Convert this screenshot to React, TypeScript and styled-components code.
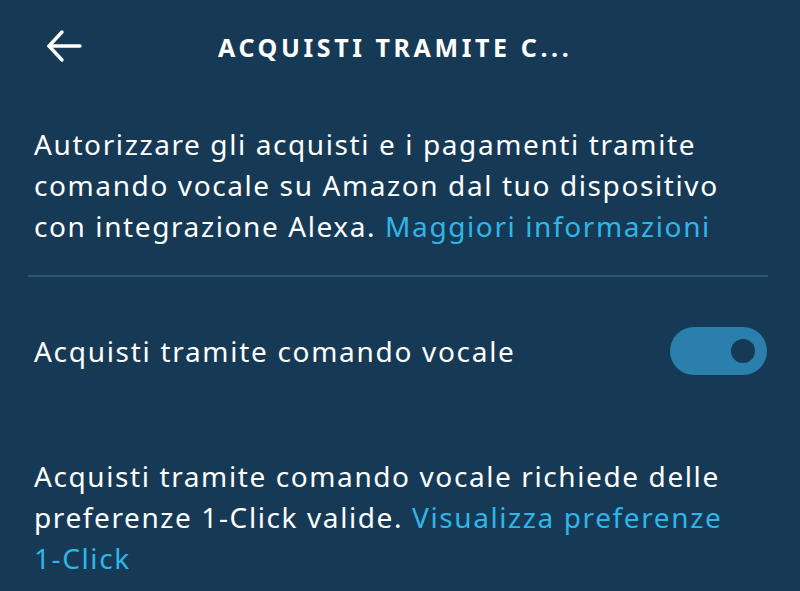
import React from 'react';
import styled, {createGlobalStyle} from 'styled-components';

const GlobalStyle = createGlobalStyle`
    html, body {
        margin: 0;
        padding: 0;
        background: #163a55;
    }
    body {
        font-family: "Noto Sans", "Open Sans", sans-serif;
        color: #ffffff;
    }
`;

const BackArrow: React.FunctionComponent = () => (
    <svg width="40" height="40" viewBox="0 0 40 40" fill="none" stroke="#ffffff" strokeWidth="3.4" strokeLinecap="round" strokeLinejoin="round">
        <path d="M36 20H5"/>
        <path d="M18 6L5 20l13 14"/>
    </svg>
);

const App: React.FunctionComponent = () => {
    const [enabled, setEnabled] = React.useState(true);
    return (
        <Wrapper>
            <GlobalStyle/>
            <Header>
                <BackButton aria-label="Indietro"><BackArrow/></BackButton>
                <Title>ACQUISTI TRAMITE C...</Title>
            </Header>
            <Section>
                <Text>
                    Autorizzare gli acquisti e i pagamenti tramite<br/>
                    comando vocale su Amazon dal tuo dispositivo<br/>
                    con integrazione Alexa. <Link href="#">Maggiori informazioni</Link>
                </Text>
            </Section>
            <Divider/>
            <ToggleRow>
                <Label>Acquisti tramite comando vocale</Label>
                <Switch $on={enabled} onClick={() => setEnabled(!enabled)} aria-pressed={enabled}>
                    <Knob $on={enabled}/>
                </Switch>
            </ToggleRow>
            <Note>
                <Text>
                    Acquisti tramite comando vocale richiede delle<br/>
                    preferenze 1-Click valide. <Link href="#">Visualizza preferenze<br/>1-Click</Link>
                </Text>
            </Note>
        </Wrapper>
    );
}

const Wrapper = styled.div`
    width: 800px;
    height: 591px;
    overflow: hidden;
    display: flex;
    flex-direction: column;
    background: #163a55;
`;

const Header = styled.div`
    height: 94px;
    flex-shrink: 0;
    display: flex;
    align-items: center;
    padding: 0 0 0 44px;
`;

const BackButton = styled.button`
    background: none;
    border: none;
    padding: 0;
    width: 40px;
    height: 40px;
    display: flex;
    align-items: center;
    justify-content: center;
    cursor: pointer;
    margin-top: -2px;
`;

const Title = styled.h1`
    flex: 1;
    margin: 0 0 0 134px;
    font-size: 25px;
    font-weight: 700;
    letter-spacing: 3.6px;
    white-space: nowrap;
    color: #ffffff;
`;

const Section = styled.div`
    padding: 30px 34px 0 34px;
`;

const Text = styled.p`
    margin: 0;
    font-size: 28px;
    line-height: 41px;
    letter-spacing: 1.6px;
    white-space: nowrap;
    color: #ffffff;
`;

const Link = styled.a`
    color: #30b5e8;
    text-decoration: none;
`;

const Divider = styled.hr`
    flex-shrink: 0;
    margin: 28px 32px 0 28px;
    border: none;
    height: 2px;
    background: #2d5875;
`;

const ToggleRow = styled.div`
    display: flex;
    align-items: center;
    justify-content: space-between;
    padding: 0 33px 0 34px;
    margin-top: 50px;
`;

const Label = styled.span`
    font-size: 28px;
    letter-spacing: 1.7px;
    color: #ffffff;
`;

const Switch = styled.button<{$on: boolean}>`
    width: 97px;
    height: 48px;
    border-radius: 24px;
    border: none;
    padding: 0 12px;
    display: flex;
    align-items: center;
    justify-content: ${p => p.$on ? 'flex-end' : 'flex-start'};
    background: ${p => p.$on ? '#2a7fac' : '#5a6f80'};
    cursor: pointer;
`;

const Knob = styled.span<{$on: boolean}>`
    width: 24px;
    height: 24px;
    border-radius: 50%;
    background: ${p => p.$on ? '#163a55' : '#ffffff'};
`;

const Note = styled.div`
    padding: 81px 34px 0 34px;
`;

export default App;
